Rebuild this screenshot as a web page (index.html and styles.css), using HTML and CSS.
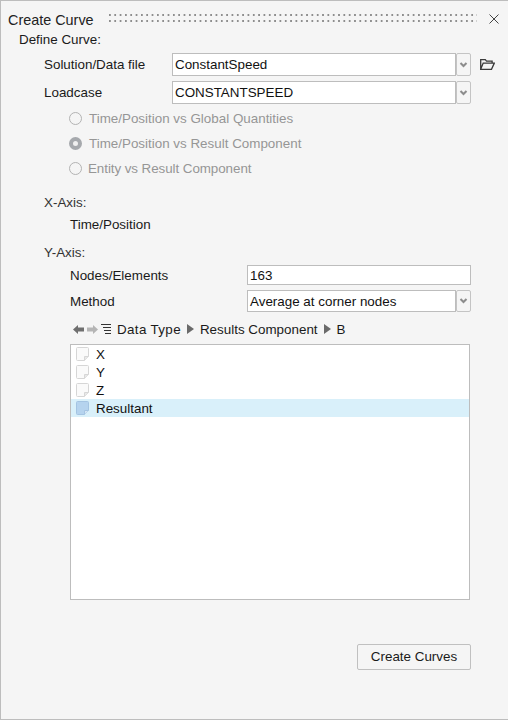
FILE: index.html
```html
<!DOCTYPE html>
<html lang="en">
<head>
<meta charset="utf-8">
<title>Create Curve</title>
<link rel="stylesheet" href="styles.css">
</head>
<body>
<main class="panel">
  <header class="titlebar">
    <h1 class="title">Create Curve</h1>
    <div class="grip"></div>
    <svg class="close" width="10" height="10" viewBox="0 0 10 10"><path d="M.5.5l9 9M9.5.5l-9 9" stroke="#444" stroke-width="1" fill="none"/></svg>
  </header>
  <div class="section-label define">Define Curve:</div>
  <div class="form-row file-row">
    <label class="row-label wide">Solution/Data file</label>
    <div class="combo file-combo"><span class="field">ConstantSpeed</span><span class="arrow"><svg width="9" height="6" viewBox="0 0 9 6"><path d="M1.5 1l3 3 3-3" stroke="#8c8c8c" stroke-width="2" fill="none"/></svg></span></div>
    <svg class="folder" width="15" height="11" viewBox="0 0 15 11"><path d="M.7 10.3V.7h4.6l1.2 1.4h5.6v2M.7 10.3h10.8l2.8-6.2H3.2L.7 10.3z" stroke="#3a3a3a" stroke-width="1.3" fill="none"/></svg>
  </div>
  <div class="form-row case-row">
    <label class="row-label wide">Loadcase</label>
    <div class="combo file-combo"><span class="field">CONSTANTSPEED</span><span class="arrow"><svg width="9" height="6" viewBox="0 0 9 6"><path d="M1.5 1l3 3 3-3" stroke="#8c8c8c" stroke-width="2" fill="none"/></svg></span></div>
  </div>
  <div class="radios">
    <div class="radio-row"><span class="radio"></span>Time/Position vs Global Quantities</div>
    <div class="radio-row"><span class="radio checked"></span>Time/Position vs Result Component</div>
    <div class="radio-row entity"><span class="radio"></span>Entity vs Result Component</div>
  </div>
  <div class="axis-label x-axis">X-Axis:</div>
  <div class="axis-value">Time/Position</div>
  <div class="axis-label y-axis">Y-Axis:</div>
  <div class="form-row nodes-row">
    <label class="row-label narrow">Nodes/Elements</label>
    <div class="combo wide-field"><span class="field">163</span></div>
  </div>
  <div class="form-row method-row">
    <label class="row-label narrow">Method</label>
    <div class="combo wide-field"><span class="field">Average at corner nodes</span><span class="arrow"><svg width="9" height="6" viewBox="0 0 9 6"><path d="M1.5 1l3 3 3-3" stroke="#8c8c8c" stroke-width="2" fill="none"/></svg></span></div>
  </div>
  <nav class="crumbs">
    <svg class="nav-icon" width="11" height="9" viewBox="0 0 11 9"><path d="M0 4.5L5 0v2.5h6v4H5V9z" fill="#6f6f6f"/></svg>
    <svg class="nav-icon" width="11" height="9" viewBox="0 0 11 9"><path d="M11 4.5L6 0v2.5H0v4h6V9z" fill="#b5b5b5"/></svg>
    <svg class="nav-icon tree" width="11" height="11" viewBox="0 0 11 11"><path d="M0 .5h10M2 3.5h8M3 6.5h7M4 9.5h6" stroke="#333" stroke-width="1"/></svg>
    <span class="crumb-first">Data Type</span>
    <i class="sep"></i>
    <span>Results Component</span>
    <i class="sep"></i>
    <span>B</span>
  </nav>
  <ul class="list">
    <li class="item"><svg class="doc" width="13" height="14" viewBox="0 0 13 14"><path d="M1.5.5h10a1 1 0 0 1 1 1v8l-4 4h-7a1 1 0 0 1-1-1v-11a1 1 0 0 1 1-1z" fill="#fafafa" stroke="#d6d6d6"/><path d="M8.5 13.5v-4h4" fill="#e8e8e8" stroke="#d6d6d6"/></svg>X</li>
    <li class="item"><svg class="doc" width="13" height="14" viewBox="0 0 13 14"><path d="M1.5.5h10a1 1 0 0 1 1 1v8l-4 4h-7a1 1 0 0 1-1-1v-11a1 1 0 0 1 1-1z" fill="#fafafa" stroke="#d6d6d6"/><path d="M8.5 13.5v-4h4" fill="#e8e8e8" stroke="#d6d6d6"/></svg>Y</li>
    <li class="item"><svg class="doc" width="13" height="14" viewBox="0 0 13 14"><path d="M1.5.5h10a1 1 0 0 1 1 1v8l-4 4h-7a1 1 0 0 1-1-1v-11a1 1 0 0 1 1-1z" fill="#fafafa" stroke="#d6d6d6"/><path d="M8.5 13.5v-4h4" fill="#e8e8e8" stroke="#d6d6d6"/></svg>Z</li>
    <li class="item selected"><svg class="doc" width="13" height="14" viewBox="0 0 13 14"><path d="M1.5.5h10a1 1 0 0 1 1 1v8l-4 4h-7a1 1 0 0 1-1-1v-11a1 1 0 0 1 1-1z" fill="#b5d3ee" stroke="#a4c4e2"/><path d="M8.5 13.5v-4h4" fill="#d5e6f5" stroke="#a4c4e2"/></svg>Resultant</li>
  </ul>
  <div class="actions"><button class="btn" type="button">Create Curves</button></div>
</main>
</body>
</html>
```
FILE: styles.css
```css
* { box-sizing: border-box; }
html, body { margin: 0; height: 100%; }
body { background: #f5f5f5; font: 13.4px/16px "Liberation Sans", Arial, sans-serif; color: #1a1a1a; }
.panel { height: 720px; border: 1px solid #bdbdbd; border-width: 1px 0 1px 1px; overflow: hidden; }
.titlebar { display: flex; align-items: center; height: 19px; margin-top: 10px; padding-left: 7px; }
.title { margin: 0; font-size: 14.4px; line-height: 19px; font-weight: 400; width: 101px; flex: none; color: #222; }
.grip { width: 368px; height: 11px; flex: none; position: relative; top: -1px;
  background-image: radial-gradient(circle at 1px 1px, #8e8e8e 1px, transparent 1px);
  background-size: 5.33px 6px; }
.close { margin-left: 12px; flex: none; align-self: flex-start; margin-top: 3px; }
.section-label { padding-left: 18px; }
.define { margin-top: 2px; }
.form-row { display: flex; align-items: center; padding-left: 43px; }
.row-label { flex: none; padding-top: 1px; }
.wide { width: 128px; }
.narrow { width: 203px; padding-left: 26px; }
.file-row { margin-top: 5px; height: 23px; }
.case-row { margin-top: 5px; height: 23px; }
.combo { display: flex; height: 100%; }
.file-combo { width: 299px; }
.wide-field { width: 224px; }
.field { flex: 1; min-width: 0; background: #fff; border: 1px solid #bdbdbd; padding: 3px 2px 0; color: #111; white-space: nowrap; }
.arrow { flex: none; width: 15px; display: flex; align-items: center; justify-content: center; border: 1px solid #c4c4c4; border-radius: 2px; }
.folder { margin-left: 9px; flex: none; }
.radios { padding-left: 68px; margin-top: 2px; color: #969696; }
.radio-row { display: flex; align-items: center; height: 25px; }
.radio { width: 13px; height: 13px; flex: none; border-radius: 50%; border: 1px solid #b3b3b3; margin-right: 7px; background: #f5f5f5; }
.radio.checked { border: 4px solid #a6a9ad; background: #f0f0f0; }
.entity { letter-spacing: -.07px; }
.entity .radio { margin-right: 6px; }
.axis-label { padding-left: 43px; color: #333; }
.x-axis { margin-top: 14px; }
.axis-value { padding-left: 69px; margin-top: 6px; }
.y-axis { margin-top: 12px; }
.nodes-row { margin-top: 4px; height: 20px; }
.nodes-row .field { padding-top: 2px; }
.method-row { margin-top: 5px; height: 22px; }
.crumbs { display: flex; align-items: center; margin: 9px 0 0 72px; height: 16px; }
.crumbs span { position: relative; top: 1px; }
.crumb-first { letter-spacing: .35px; }
.nav-icon { flex: none; margin-right: 3px; }
.tree { margin: 0 5px 0 0; }
.sep { width: 0; height: 0; margin: 0 6px; border-left: 7px solid #6a6a6a; border-top: 5px solid transparent; border-bottom: 5px solid transparent; }
.list { list-style: none; margin: 7px 0 0 69px; padding: 0; width: 400px; height: 256px; border: 1px solid #bdbdbd; background: #fff; }
.item { display: flex; align-items: center; height: 18px; padding-left: 5px; padding-top: 1px; color: #111; }
.doc { margin-right: 7px; flex: none; position: relative; top: -1px; }
.selected { background: #d9f0fa; }
.actions { display: flex; justify-content: flex-end; padding-right: 37px; margin-top: 44px; }
.btn { width: 114px; height: 26px; padding: 0; font: inherit; color: #1a1a1a; background: #f5f5f5; border: 1px solid #c0c0c0; border-radius: 2px; }
```
